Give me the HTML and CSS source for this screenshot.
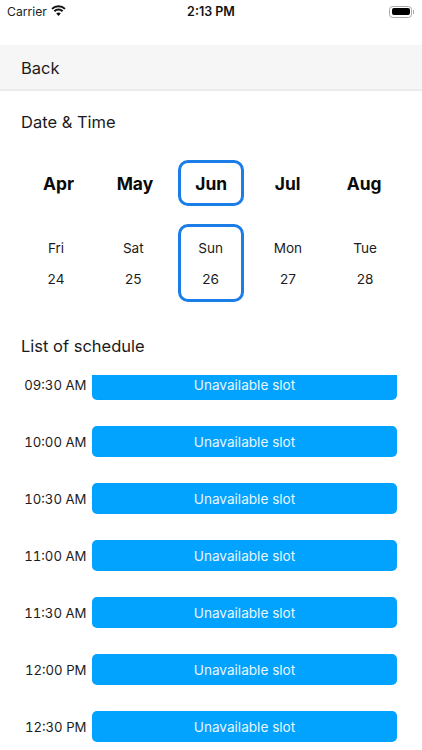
FILE: index.html
```html
<!DOCTYPE html>
<html lang="en">
<head>
<meta charset="utf-8">
<title>Date &amp; Time</title>
<link rel="stylesheet" href="styles.css">
</head>
<body>
<div class="screen">
  <header class="status">
    <div class="status-left">
      <span class="carrier">Carrier</span>
      <svg class="wifi" viewBox="0 0 15 11" width="15" height="11"><path class="wifi-arc" d="M1 3.900a9.200 9.200 0 0 1 13 0"/><path class="wifi-arc" d="M3.400 6.300a5.800 5.800 0 0 1 8.200 0"/><path class="wifi-dot" d="M7.500 11 5.200 8.500a3.300 3.300 0 0 1 4.600 0z"/></svg>
    </div>
    <span class="clock">2:13 PM</span>
    <div class="status-right">
      <span class="battery"><span class="battery-fill"></span></span><span class="battery-cap"></span>
    </div>
  </header>
  <nav class="navbar"><span class="back">Back</span></nav>
  <h2 class="heading date-heading">Date &amp; Time</h2>
  <div class="months">
    <div class="month">Apr</div>
    <div class="month">May</div>
    <div class="month selected">Jun</div>
    <div class="month">Jul</div>
    <div class="month">Aug</div>
  </div>
  <div class="days">
    <div class="day"><span>Fri</span><span>24</span></div>
    <div class="day"><span>Sat</span><span>25</span></div>
    <div class="day selected"><span>Sun</span><span>26</span></div>
    <div class="day"><span>Mon</span><span>27</span></div>
    <div class="day"><span>Tue</span><span>28</span></div>
  </div>
  <h2 class="heading list-heading">List of schedule</h2>
  <div class="schedule">
    <div class="schedule-inner">
      <div class="row"><span class="time">09:30 AM</span><div class="slot">Unavailable slot</div></div>
      <div class="row"><span class="time">10:00 AM</span><div class="slot">Unavailable slot</div></div>
      <div class="row"><span class="time">10:30 AM</span><div class="slot">Unavailable slot</div></div>
      <div class="row"><span class="time">11:00 AM</span><div class="slot">Unavailable slot</div></div>
      <div class="row"><span class="time">11:30 AM</span><div class="slot">Unavailable slot</div></div>
      <div class="row"><span class="time">12:00 PM</span><div class="slot">Unavailable slot</div></div>
      <div class="row"><span class="time">12:30 PM</span><div class="slot">Unavailable slot</div></div>
    </div>
  </div>
</div>
</body>
</html>
```
FILE: styles.css
```css
* { box-sizing: border-box; }
html, body { margin: 0; padding: 0; background: #fff; }
body { font-family: Inter, "Liberation Sans", sans-serif; color: #1a1a1a; }
.screen { width: 422px; height: 750px; overflow: hidden; display: flex; flex-direction: column; }

.status { height: 23px; display: grid; grid-template-columns: 1fr auto 1fr; align-items: center; padding: 0 7px; flex: none; }
.status-left { display: flex; align-items: center; gap: 4px; }
.carrier { font-size: 12.2px; color: #222; }
.wifi { margin-top: -2px; }
.wifi-arc { fill: none; stroke: #111; stroke-width: 2; }
.wifi-dot { fill: #111; }
.clock { font-size: 12.500px; font-weight: 600; color: #111; }
.status-right { display: flex; align-items: center; justify-content: flex-end; margin-right: 1px; }
.battery { width: 23px; height: 12px; border: 1px solid #aaa; border-radius: 3.500px; padding: 1.500px; display: flex; }
.battery-fill { flex: 1; background: #000; border-radius: 2px; }
.battery-cap { width: 1px; height: 4px; background: #aaa; margin-left: 1px; }

.navbar { margin-top: 22px; height: 46px; flex: none; background: #f6f6f6; border-bottom: 2px solid #ececec; display: flex; align-items: center; padding: 1px 0 0 21px; }
.back { font-size: 16.500px; color: #1c1c1c; }

.heading { margin: 0; padding-left: 21px; font-size: 16.500px; font-weight: 400; line-height: 22px; color: #1a1a1a; }
.date-heading { margin-top: 20px; }

.months { margin-top: 27px; display: grid; grid-template-columns: repeat(5, 66px); column-gap: 10.400px; padding-left: 25.500px; flex: none; }
.month { height: 46px; display: flex; align-items: center; justify-content: center; font-size: 17.400px; font-weight: 700; color: #0a0a0a; border: 3px solid transparent; border-radius: 10px; }
.month.selected { border-color: #1a7de8; }

.days { margin-top: 18px; display: grid; grid-template-columns: repeat(5, 66px); column-gap: 11.300px; padding-left: 23px; flex: none; }
.day { height: 78px; display: flex; flex-direction: column; align-items: center; justify-content: center; gap: 13px; font-size: 13.600px; line-height: 18px; color: #1c1c1c; border: 3px solid transparent; border-radius: 10px; }
.day.selected { border-color: #1a7de8; }

.list-heading { margin-top: 33px; }

.schedule { margin-top: 18px; flex: 1; min-height: 0; overflow: hidden; }
.schedule-inner { margin-top: -6px; display: flex; flex-direction: column; gap: 26px; padding: 0 25px 0 0; }
.row { display: flex; align-items: center; height: 31px; }
.time { width: 92px; flex: none; padding-right: 5.500px; text-align: right; font-size: 13.200px; font-variant-numeric: tabular-nums; color: #1c1c1c; white-space: nowrap; }
.slot { flex: 1; height: 31px; background: #02a3fe; border-radius: 5px; color: #e8f6ff; font-size: 13.600px; display: flex; align-items: center; justify-content: center; }
```
